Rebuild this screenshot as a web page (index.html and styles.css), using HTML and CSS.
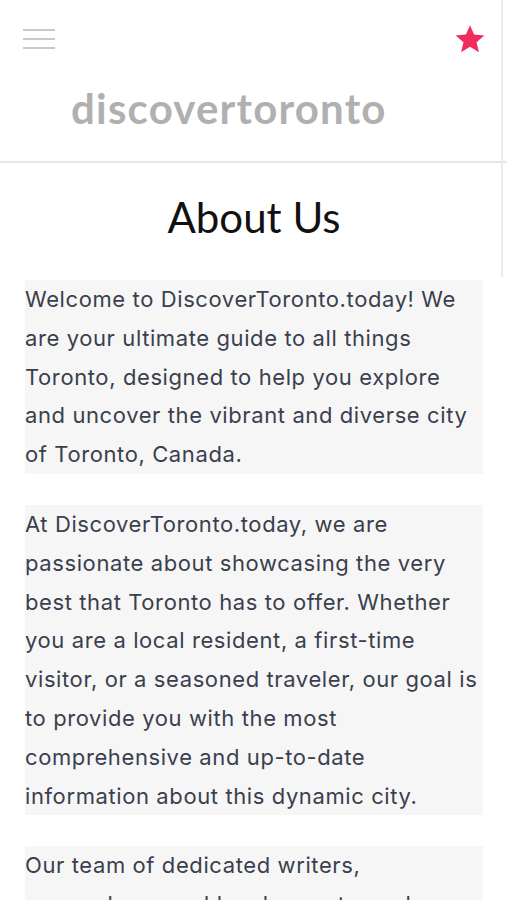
FILE: index.html
```html
<!DOCTYPE html>
<html lang="en">

<head>
  <meta charset="UTF-8">
  <meta name="viewport" content="width=device-width, initial-scale=1.0">
  <title>About Us - discovertoronto</title>
  <link rel="stylesheet" href="styles.css">
</head>

<body>
  <header class="topbar">
    <div class="topbar-row">
      <button class="menu-btn" aria-label="Menu">
        <span></span><span></span><span></span>
      </button>
      <button class="fav-btn" aria-label="Favourites">
        <svg viewBox="0 0 24 24" width="32" height="32">
          <path d="M12 1.6l3.05 7.1 7.7.6-5.85 5.05 1.8 7.5L12 17.8l-6.7 4.05 1.8-7.5L1.25 9.3l7.7-.6z" fill="#f22d5b"/>
        </svg>
      </button>
    </div>
    <div class="logo">discovertoronto</div>
  </header>

  <main class="content">
    <h1>About Us</h1>
    <p>Welcome to DiscoverToronto.today! We are your ultimate guide to all things Toronto, designed to help you explore and uncover the vibrant and diverse city of Toronto, Canada.</p>
    <p>At DiscoverToronto.today, we are passionate about showcasing the very best that Toronto has to offer. Whether you are a local resident, a first-time visitor, or a seasoned traveler, our goal is to provide you with the most comprehensive and up-to-date information about this dynamic city.</p>
    <p>Our team of dedicated writers, researchers, and local experts work tirelessly to bring you the latest news, events and hidden gems across the city.</p>
  </main>

  <div class="scroll-thumb"></div>
</body>

</html>
```

FILE: styles.css
```css
body {
  margin: 0;
  background: #fff;
  font-family: Inter, "Noto Sans", sans-serif;
  overflow: hidden;
}

.topbar {
  height: 161px;
  border-bottom: 2px solid #e6e6e6;
}

.topbar-row {
  display: flex;
  justify-content: space-between;
  align-items: center;
  padding: 20px 21px 0 23px;
  height: 38px;
}

.menu-btn {
  display: flex;
  flex-direction: column;
  gap: 7px;
  width: 32px;
  padding: 0;
  border: 0;
  background: none;
}

.menu-btn span {
  display: block;
  height: 2px;
  background: #c9c9c9;
}

.fav-btn {
  padding: 0;
  border: 0;
  background: none;
  display: flex;
}

.logo {
  margin: 25px 0 0 71px;
  font-family: Lato, sans-serif;
  font-weight: 700;
  font-size: 42px;
  letter-spacing: 1.2px;
  color: #b0b0b0;
}

.content {
  padding: 0 24px 0 25px;
}

h1 {
  margin: 30px 0 0;
  height: 87px;
  text-align: center;
  font-family: Lato, sans-serif;
  font-weight: 400;
  font-size: 42px;
  line-height: 48px;
  color: #111;
}

.content p {
  margin: 0 0 31px;
  background: #f6f6f7;
  color: #3b3f4d;
  font-size: 22px;
  letter-spacing: 0.6px;
  line-height: 38.8px;
}

.scroll-thumb {
  position: fixed;
  top: 0;
  right: 4px;
  width: 2px;
  height: 277px;
  background: #ececec;
}
```
